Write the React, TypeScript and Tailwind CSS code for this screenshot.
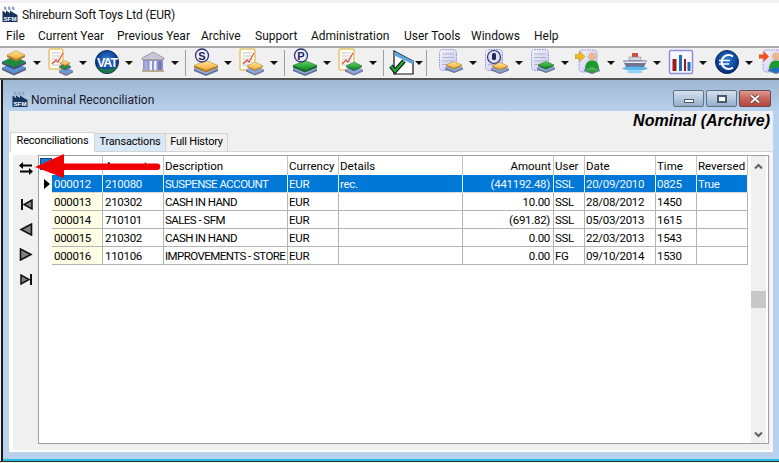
import React from "react";

const MENU: [string, string][] = [
  ["File", "w-[32px]"],
  ["Current Year", "w-[79px]"],
  ["Previous Year", "w-[84px]"],
  ["Archive", "w-[54px]"],
  ["Support", "w-[56px]"],
  ["Administration", "w-[93px]"],
  ["User Tools", "w-[67px]"],
  ["Windows", "w-[63px]"],
  ["Help", "w-[40px]"],
];

type Row = { no: string; acc: string; desc: string; cur: string; det: string; amt: string; user: string; date: string; time: string; rev: string; sel?: boolean };
const ROWS: Row[] = [
  { no: "000012", acc: "210080", desc: "SUSPENSE ACCOUNT", cur: "EUR", det: "rec.", amt: "(441192.48)", user: "SSL", date: "20/09/2010", time: "0825", rev: "True", sel: true },
  { no: "000013", acc: "210302", desc: "CASH IN HAND", cur: "EUR", det: "", amt: "10.00", user: "SSL", date: "28/08/2012", time: "1450", rev: "" },
  { no: "000014", acc: "710101", desc: "SALES - SFM", cur: "EUR", det: "", amt: "(691.82)", user: "SSL", date: "05/03/2013", time: "1615", rev: "" },
  { no: "000015", acc: "210302", desc: "CASH IN HAND", cur: "EUR", det: "", amt: "0.00", user: "SSL", date: "22/03/2013", time: "1543", rev: "" },
  { no: "000016", acc: "110106", desc: "IMPROVEMENTS - STORE", cur: "EUR", det: "", amt: "0.00", user: "FG", date: "09/10/2014", time: "1530", rev: "" },
];

const Defs = () => (
  <svg width="0" height="0" className="absolute">
    <defs>
      <radialGradient id="globe" cx="50%" cy="40%" r="60%">
        <stop offset="0%" stopColor="#2f7fd8" />
        <stop offset="75%" stopColor="#0d3f92" />
        <stop offset="100%" stopColor="#0a2a66" />
      </radialGradient>
      <linearGradient id="orange" x1="0" y1="0" x2="0" y2="1">
        <stop offset="0%" stopColor="#ffe9a0" />
        <stop offset="100%" stopColor="#f3a52a" />
      </linearGradient>
      <linearGradient id="green" x1="0" y1="0" x2="0" y2="1">
        <stop offset="0%" stopColor="#5fd35f" />
        <stop offset="100%" stopColor="#108a1c" />
      </linearGradient>
      <linearGradient id="lilac" x1="0" y1="0" x2="1" y2="1">
        <stop offset="0%" stopColor="#f4f4ff" />
        <stop offset="100%" stopColor="#c4c4ee" />
      </linearGradient>
    </defs>
  </svg>
);

const Layer = ({ x = 13, y, w = 12, h = 5.5, fill, edge = "#5d6f9c", t = 2 }: { x?: number; y: number; w?: number; h?: number; fill: string; edge?: string; t?: number }) => (
  <g>
    <path d={`M${x - w} ${y}L${x} ${y + h}L${x + w} ${y}v${t}L${x} ${y + h + t}L${x - w} ${y + t}z`} fill={edge} />
    <path d={`M${x - w} ${y}L${x} ${y - h}L${x + w} ${y}L${x} ${y + h}z`} fill={fill} stroke={edge} strokeWidth="0.5" />
  </g>
);

const Paper = ({ x = 2, y = 2, w = 17, h = 21 }: { x?: number; y?: number; w?: number; h?: number }) => (
  <g>
    <rect x={x} y={y} width={w} height={h} rx="1.5" fill="#fffdf4" stroke="#e8c56c" strokeWidth="1.5" />
    {[4, 7, 10, 13, 16].map((d) => (
      <path key={d} d={`M${x + 2.5} ${y + d}h${w - 5}`} stroke="#b9b9c9" strokeWidth="0.8" />
    ))}
    <path d={`M${x + 3} ${y + 15}l4 -4l2 2l5 -9`} stroke="#e04a3a" strokeWidth="1.1" fill="none" />
  </g>
);

const DashedDoc = ({ children }: { children?: React.ReactNode }) => (
  <g>
    <rect x="2.5" y="1.5" width="17" height="21" rx="3" fill="url(#lilac)" stroke="#8f8fdc" strokeWidth="1" strokeDasharray="1.5 1" />
    {[6, 9.5, 13, 16.5].map((y) => (
      <path key={y} d={`M5 ${y}h12`} stroke="#b4b4c8" strokeWidth="1" />
    ))}
    {children}
  </g>
);

const Badge = ({ l }: { l: string }) => (
  <g>
    <circle cx="10" cy="7.5" r="6.5" fill="#eef0fa" stroke="#2c2f78" strokeWidth="1.3" />
    <text x="10" y="11.5" textAnchor="middle" fontSize="11" fontWeight="700" fontFamily="Liberation Sans, sans-serif" fill="#23265f">{l}</text>
  </g>
);

const Person = () => (
  <g>
    <circle cx="17" cy="8.5" r="4" fill="#e8b890" />
    <path d="M10 21c0-6 3-8.5 7-8.5s7 2.5 7 8.5z" fill="#1f9a2c" />
  </g>
);

const ICONS: Record<string, React.ReactNode> = {
  stacks: (
    <g>
      <Layer x={13} y={20} fill="#5a93d8" edge="#55607f" />
      <Layer x={13} y={14} fill="#1e8a3c" edge="#3b4a7a" />
      <Layer x={15} y={7} w={9} h={4.5} fill="url(#orange)" edge="#a97a2a" />
    </g>
  ),
  docStack: (
    <g>
      <Paper x={2} y={1} w={14} h={20} />
      <Layer x={19} y={23} w={7} h={3.5} fill="#6d9ada" edge="#6a7394" t={1.5} />
      <Layer x={18} y={18.5} w={6} h={3} fill="#238c3e" edge="#4a5a80" t={1} />
      <Layer x={18} y={15} w={5} h={2.5} fill="url(#orange)" edge="#a97a2a" t={1} />
    </g>
  ),
  vat: (
    <g>
      <circle cx="14" cy="14" r="11.5" fill="url(#globe)" stroke="#0a2860" />
      <path d="M3 18a12 12 0 0 0 22 0a14 8 0 0 1 -22 0z" fill="#1f8a3a" opacity="0.75" />
      <text x="14" y="18.5" textAnchor="middle" fontSize="12.5" fontWeight="700" fontFamily="Liberation Sans, sans-serif" fill="#fff" letterSpacing="-1">VAT</text>
    </g>
  ),
  bank: (
    <g>
      <path d="M14 4L25 10v1.5H3V10z" fill="#c9c6dc" stroke="#9a8b78" strokeWidth="0.8" />
      <rect x="4" y="12" width="20" height="10" fill="#8d94cc" />
      <rect x="10.5" y="13" width="2.5" height="9" fill="#f1f1fb" />
      <rect x="15" y="13" width="2.5" height="9" fill="#f1f1fb" />
      <rect x="5.5" y="13" width="3" height="9" fill="#aab0de" />
      <rect x="19.5" y="13" width="3" height="9" fill="#6f77b6" />
      <rect x="3" y="22" width="22" height="2" fill="#b8a890" />
    </g>
  ),
  sStack: (
    <g>
      <Layer x={14} y={21} w={12} h={5} fill="#9fb8e8" edge="#5d6f9c" />
      <Layer x={14} y={17.5} w={12} h={5} fill="url(#orange)" edge="#a97a2a" />
      <Badge l="S" />
    </g>
  ),
  docOrange: (
    <g>
      <Paper x={2} y={1} w={15} h={21} />
      <Layer x={17} y={22} w={9} h={4} fill="#8aa9e0" edge="#6a7394" t={1.5} />
      <Layer x={17} y={18} w={8} h={4} fill="url(#orange)" edge="#a97a2a" t={1} />
    </g>
  ),
  pStack: (
    <g>
      <Layer x={14} y={21} w={12} h={5} fill="#9fb8e8" edge="#5d6f9c" />
      <Layer x={14} y={17.5} w={12} h={5} fill="url(#green)" edge="#14602a" />
      <Badge l="P" />
    </g>
  ),
  docGreen: (
    <g>
      <Paper x={2} y={1} w={15} h={21} />
      <Layer x={17} y={22} w={9} h={4} fill="#8aa9e0" edge="#6a7394" t={1.5} />
      <Layer x={17} y={18} w={8} h={4} fill="url(#green)" edge="#14602a" t={1} />
    </g>
  ),
  check: (
    <g>
      <path d="M6 3L25 13v13H6z" fill="#fff" stroke="#111" strokeWidth="1.2" />
      <path d="M6.5 3.5L25 13v3.5L6.5 7.5z" fill="#5fa6dc" />
      <path d="M3 18l4 5l9 -10" fill="none" stroke="#111" strokeWidth="4.6" />
      <path d="M3 18l4 5l9 -10" fill="none" stroke="#1aa53a" strokeWidth="2.6" />
    </g>
  ),
  dashOrange: (
    <DashedDoc>
      <Layer x={17} y={20} w={9} h={3.5} fill="#8aa9e0" edge="#6a7394" t={1.5} />
      <Layer x={17} y={17} w={8} h={3.5} fill="url(#orange)" edge="#a97a2a" t={1} />
    </DashedDoc>
  ),
  dashO: (
    <DashedDoc>
      <circle cx="11" cy="9" r="6.5" fill="#dfe0f0" stroke="#2c2f78" strokeWidth="1.2" />
      <rect x="9" y="5" width="4" height="7" rx="1.5" fill="#23265f" />
      <Layer x={17} y={21} w={9} h={3.5} fill="#8aa9e0" edge="#6a7394" t={1.5} />
      <Layer x={17} y={18} w={8} h={3.5} fill="url(#orange)" edge="#a97a2a" t={1} />
    </DashedDoc>
  ),
  dashGreen: (
    <DashedDoc>
      <Layer x={17} y={20} w={9} h={3.5} fill="#8aa9e0" edge="#6a7394" t={1.5} />
      <Layer x={17} y={17} w={8} h={3.5} fill="url(#green)" edge="#14602a" t={1} />
    </DashedDoc>
  ),
  arrowPerson: (
    <g>
      <rect x="4" y="2" width="18" height="22" rx="3" fill="url(#lilac)" stroke="#8f8fdc" strokeWidth="1" strokeDasharray="1.5 1" />
      <Person />
      <Layer x={17} y={22} w={8} h={3} fill="url(#green)" edge="#5d6f9c" t={1} />
      <path d="M0 6.5h4.5V3l5.5 5.5L4.5 14v-3.5H0z" fill="#f2bb1e" stroke="#b5851a" strokeWidth="0.5" />
    </g>
  ),
  ship: (
    <g>
      <rect x="11" y="5" width="6" height="4" fill="#d94a3a" />
      <rect x="8" y="9" width="12" height="3.5" fill="#d4d6e6" stroke="#7a7c90" strokeWidth="0.5" />
      <path d="M2 12.5h24l-3 6.5H5z" fill="#6d7390" />
      <path d="M3 13.5h22l-.6 1.5H3.6z" fill="#f1f1f7" />
      <ellipse cx="14" cy="20.5" rx="12.5" ry="2" fill="#5bb8ee" />
      <ellipse cx="14" cy="24" rx="8" ry="1.3" fill="#8ed2f6" />
    </g>
  ),
  chart: (
    <g>
      <rect x="2.5" y="2.5" width="23" height="23" rx="1.5" fill="#f7f7ff" stroke="#8f8fdc" strokeWidth="1.5" />
      <rect x="5.5" y="11" width="4" height="12" fill="#9c1a1a" />
      <rect x="12" y="7" width="3" height="16" fill="#1a6dc0" />
      <rect x="17" y="11" width="2" height="12" fill="#9c1a1a" />
      <rect x="20.5" y="14" width="3" height="9" fill="#1a6dc0" />
    </g>
  ),
  euro: (
    <g>
      <circle cx="14" cy="14" r="11.5" fill="url(#globe)" stroke="#0a2860" />
      <path d="M3 10a12 12 0 0 1 8-7a14 12 0 0 0 -8 7z" fill="#2ea04a" />
      <path d="M20 8.5a7 7 0 1 0 0 11" fill="none" stroke="#fff" strokeWidth="2.2" />
      <path d="M6 12.5h11M6 16h10" stroke="#fff" strokeWidth="1.6" />
    </g>
  ),
  redPerson: (
    <g>
      <rect x="4" y="2" width="18" height="22" rx="3" fill="url(#lilac)" stroke="#8f8fdc" strokeWidth="1" strokeDasharray="1.5 1" />
      <Person />
      <Layer x={17} y={22} w={8} h={3} fill="#1f6fc0" edge="#5d6f9c" t={1} />
      <path d="M0 6.5h4.5V3l5.5 5.5L4.5 14v-3.5H0z" fill="#f0501e" />
    </g>
  ),
};

const Logo = ({ cls = "" }: { cls?: string }) => (
  <svg width="16" height="16" viewBox="0 0 16 16" className={`shrink-0 ${cls}`}>
    <path d="M2 0l2.5 1.5v3L2 3.500zM6 0l2.500 1.500v3L6 3.500zM10 0l2.500 1.500v3L10 3.500z" fill="#8ea6c6" />
    <path d="M0.500 16V4.500l3.500 2.500V4.500l4 2.500V4.500l4 2.500l3.500 2V16z" fill="#16345e" />
    <text x="8" y="14.7" textAnchor="middle" fontSize="6.2" fontWeight="700" fontFamily="Liberation Sans, sans-serif" fill="#fff">SFM</text>
  </svg>
);

const Caret = () => <span className="block w-0 h-0 border-l-[4px] border-r-[4px] border-t-[4px] border-l-transparent border-r-transparent border-t-[#111]" />;

const Tool = ({ name, narrow }: { name: string; narrow?: boolean }) => (
  <div className={narrow ? "w-[38px] h-full flex items-center shrink-0" : "w-[46px] h-full flex items-center shrink-0"}>
    <svg width="28" height="28" viewBox="0 0 28 28" className="shrink-0 ml-[1px] -mt-[2px]">
      {ICONS[name]}
    </svg>
    <span className={narrow ? "-ml-[1px] -mt-[1px]" : "ml-[4px] -mt-[1px]"}>
      <Caret />
    </span>
  </div>
);

const Sep = ({ w }: { w: string }) => (
  <div className={`${w} h-full flex items-center shrink-0`}>
    <div className="ml-[1px] w-px h-[26px] bg-[#a0a0a0]" />
  </div>
);

const COLS = ["w-[51px]", "w-[61px]", "w-[124px]", "w-[51px]", "w-[124px]", "w-[91px]", "w-[31px]", "w-[71px]", "w-[41px]", "w-[51px]"];

const Cell = ({ w, children, right, cls = "" }: { w: string; children?: React.ReactNode; right?: boolean; cls?: string }) => (
  <div className={`${w} shrink-0 h-full border-r border-b border-[#b4b4b4] overflow-hidden whitespace-nowrap flex items-center ${right ? "justify-end pr-[1px]" : "pl-[1px]"} ${cls}`}>
    {children}
  </div>
);

const WinBtn = ({ kind }: { kind: "min" | "max" | "close" }) => (
  <div className={`${kind === "close" ? "w-[32px] bg-gradient-to-b from-[#dc9a92] via-[#c8655a] to-[#b3473c] border-[#6b4a50]" : "w-[31px] bg-gradient-to-b from-[#d4e0ee] via-[#b8cade] to-[#94aecb] border-[#5f7287]"} h-[17px] border rounded-[2px] flex items-center justify-center`}>
    {kind === "min" && <div className="w-[10px] h-[4px] mt-[5px] bg-white border border-[#4a5a6c]" />}
    {kind === "max" && <div className="w-[10px] h-[8px] bg-white border-2 border-[#4a5a6c]" />}
    {kind === "close" && (
      <svg width="12" height="10" viewBox="0 0 12 10">
        <path d="M2 1.5l8 7M10 1.5l-8 7" stroke="#4a2a2a" strokeWidth="3.2" />
        <path d="M2 1.5l8 7M10 1.5l-8 7" stroke="#fff" strokeWidth="2" />
      </svg>
    )}
  </div>
);

const NavBtn = ({ children, cls }: { children: React.ReactNode; cls: string }) => (
  <div className={`w-[18px] h-[16px] flex items-center justify-center ${cls}`}>{children}</div>
);

export default function App() {
  return (
    <div className="relative w-[779px] h-[463px] overflow-hidden bg-[#f0f0f0] flex flex-col text-black font-['Roboto',sans-serif]">
      <Defs />
      <div className="h-[3px] bg-[#f2f2f6]" />
      <div className="h-[22px] bg-white flex items-center pl-[2px] text-[12px] text-[#111]">
        <Logo />
        <span className="ml-[4px] mt-[2px] tracking-[-0.15px]">Shireburn Soft Toys Ltd (EUR)</span>
      </div>
      <div className="h-[21px] bg-white flex items-center pl-[6px] text-[12px] text-[#111]">
        {MENU.map(([m, w]) => (
          <span key={m} className={`${w} shrink-0 whitespace-nowrap`}>{m}</span>
        ))}
      </div>
      <div className="h-[34px] bg-[#f0f0f0] border-t-2 border-b-2 border-t-[#a9a9a9] border-b-[#555] flex items-center overflow-hidden">
        <Tool name="stacks" />
        <Tool name="docStack" />
        <Tool name="vat" />
        <Tool name="bank" />
        <Sep w="w-[7px]" />
        <Tool name="sStack" />
        <Tool name="docOrange" />
        <Sep w="w-[7px]" />
        <Tool name="pStack" />
        <Tool name="docGreen" />
        <Sep w="w-[5px]" />
        <Tool name="check" narrow />
        <Sep w="w-[11px]" />
        <Tool name="dashOrange" />
        <Tool name="dashO" />
        <Tool name="dashGreen" />
        <Tool name="arrowPerson" />
        <Tool name="ship" />
        <Tool name="chart" />
        <Tool name="euro" />
        <Tool name="redPerson" />
      </div>

      <div className="flex-1 flex flex-col min-h-0 ml-[1px] border-l-2 border-[#1a1a1a] bg-[#b8d1ec]">
        <div className="h-[31px] shrink-0 bg-gradient-to-b from-[#9fb7d2] to-[#b8d1ec] flex items-center pl-[9px] pr-[2px] pt-[8px] text-[12px] text-[#1a1a2a]">
          <Logo cls="-mt-[2px]" />
          <span className="ml-[3px] mt-[1px]">Nominal Reconciliation</span>
          <div className="ml-auto flex gap-[2px] -mt-[2px] mr-[6px]">
            <WinBtn kind="min" />
            <WinBtn kind="max" />
            <WinBtn kind="close" />
          </div>
        </div>
        <div className="h-[341px] shrink-0 ml-[6px] mr-[6px] bg-[#f0f0f0] flex flex-col">
          <div className="h-[20px] shrink-0 flex items-center justify-end pr-[3px] text-[16px] font-bold italic font-['Liberation_Sans',sans-serif] text-black">
            Nominal (Archive)
          </div>
          <div className="h-[20px] shrink-0 flex items-end pl-[1px] text-[11px]">
            <div className="w-[85px] h-[20px] bg-white border border-b-0 border-[#d4d4d4] flex items-center justify-center -mb-px z-10 pb-[2px] tracking-[-0.2px]">Reconciliations</div>
            <div className="w-[71px] h-[18px] bg-[#d9e8f6] border-t border-r border-[#d4d4d4] flex items-center justify-center tracking-[-0.2px]">Transactions</div>
            <div className="w-[62px] h-[18px] bg-[#f0f0f0] border-t border-r border-[#d4d4d4] flex items-center justify-center tracking-[-0.2px]">Full History</div>
          </div>
          <div className="flex-1 min-h-0 bg-white border-t border-[#d4d4d4] mr-[1px] pl-[4px] pr-[1px] pt-[3px] pb-[2px]">
            <div className="h-full bg-[#f0f0f0] flex pr-[2px]">
              <div className="w-[25px] shrink-0 flex flex-col items-start pl-[4px] pt-[5px]">
                <NavBtn cls="">
                  <svg width="14" height="13" viewBox="0 0 14 13">
                    <path d="M0 3.5L4 0v2.500h9v2H4V7zM14 9.5L10 6v2.500H1v2h9V13z" fill="#000" />
                  </svg>
                </NavBtn>
                <NavBtn cls="mt-[20px]">
                  <svg width="13" height="11" viewBox="0 0 13 11">
                    <path d="M1 0h2v11H1z" fill="#111" />
                    <path d="M12 1v9L4 5.5z" fill="#808080" stroke="#111" strokeWidth="1.5" />
                  </svg>
                </NavBtn>
                <NavBtn cls="mt-[9px]">
                  <svg width="14" height="13" viewBox="0 0 14 13">
                    <path d="M12.5 1v11L2 6.5z" fill="#808080" stroke="#111" strokeWidth="1.6" />
                  </svg>
                </NavBtn>
                <NavBtn cls="mt-[9px]">
                  <svg width="14" height="13" viewBox="0 0 14 13">
                    <path d="M1.5 1v11L12 6.5z" fill="#808080" stroke="#111" strokeWidth="1.6" />
                  </svg>
                </NavBtn>
                <NavBtn cls="mt-[9px]">
                  <svg width="13" height="11" viewBox="0 0 13 11">
                    <path d="M12 0h-2v11h2z" fill="#111" />
                    <path d="M1 1v9L9 5.5z" fill="#808080" stroke="#111" strokeWidth="1.5" />
                  </svg>
                </NavBtn>
              </div>
              <div className="w-[731px] shrink-0 h-[289px] bg-white border border-[#a0a0a0] flex text-[11.5px]">
                <div className="w-[709px] shrink-0 flex flex-col">
                  <div className="h-[19px] flex items-stretch">
                    <div className="w-[13px] shrink-0 flex items-start pl-[1px] pt-[2px]">
                      <div className="w-[12px] h-[12px] bg-[#1f78d0] border border-[#0a4a90]" />
                    </div>
                    {["", "Account", "Description", "Currency", "Details", "Amount", "User", "Date", "Time", "Reversed"].map((h, i) => (
                      <Cell key={i} w={COLS[i]} right={i === 5} cls="border-b-0 border-[#c4c4c4]">
                        <span className={`mt-[3px] ${i === 5 ? "mr-[1px]" : i < 2 ? "ml-[1px]" : ""}`}>{h}</span>
                      </Cell>
                    ))}
                  </div>
                  {ROWS.map((r) => {
                    const vals = [r.no, r.acc, r.desc, r.cur, r.det, r.amt, r.user, r.date, r.time, r.rev];
                    return (
                      <div key={r.no} className={`h-[18px] flex items-stretch ${r.sel ? "bg-[#0078d7] text-[#f2f8ff]" : ""}`}>
                        <div className="w-[13px] shrink-0 bg-white flex items-center justify-center">
                          {r.sel && <div className="w-0 h-0 ml-[2px] border-t-[5px] border-b-[5px] border-l-[6px] border-t-transparent border-b-transparent border-l-black" />}
                        </div>
                        {vals.map((v, i) => (
                          <Cell key={i} w={COLS[i]} right={i === 5} cls={`${i === 0 && !r.sel ? "bg-[#ffffe6]" : ""} ${r.sel ? "border-[#0078d7] border-r-[#e8f0f8] border-b-[#d8d8d8]" : ""}`}>
                            <span className={`mt-[2px] ${i === 5 ? "mr-[2px]" : i < 2 ? "ml-[1px]" : ""} ${i === 2 ? "tracking-[-0.55px]" : "tracking-[-0.3px]"}`}>{v}</span>
                          </Cell>
                        ))}
                      </div>
                    );
                  })}
                </div>
                <div className="w-[3px] shrink-0" />
                <div className="w-[15px] shrink-0 bg-[#f0f0f0] flex flex-col items-center">
                  <svg width="9" height="7" viewBox="0 0 9 7" className="mt-[7px] shrink-0">
                    <path d="M1 5.5L4.5 2L8 5.5" fill="none" stroke="#606060" strokeWidth="2" />
                  </svg>
                  <div className="w-full h-[17px] mt-[121px] bg-[#c8c8c8] shrink-0" />
                  <svg width="9" height="7" viewBox="0 0 9 7" className="mt-auto mb-[5px] shrink-0">
                    <path d="M1 1.5L4.5 5L8 1.5" fill="none" stroke="#606060" strokeWidth="2" />
                  </svg>
                </div>
              </div>
            </div>
          </div>
        </div>
        <div className="flex-1" />
        <div className="h-[2px] bg-[#22c0e0] shrink-0" />
      </div>
      <div className="h-[1px] bg-[#333] shrink-0" />
      <div className="h-[1px] bg-[#f0f0f0] shrink-0" />

      <svg width="140" height="30" viewBox="0 0 140 30" className="absolute left-[32px] top-[152px]">
        <path d="M3 15L32 2v9.5h93a3.25 3.25 0 0 1 0 6.5H32v8z" fill="#f00000" />
      </svg>
    </div>
  );
}
